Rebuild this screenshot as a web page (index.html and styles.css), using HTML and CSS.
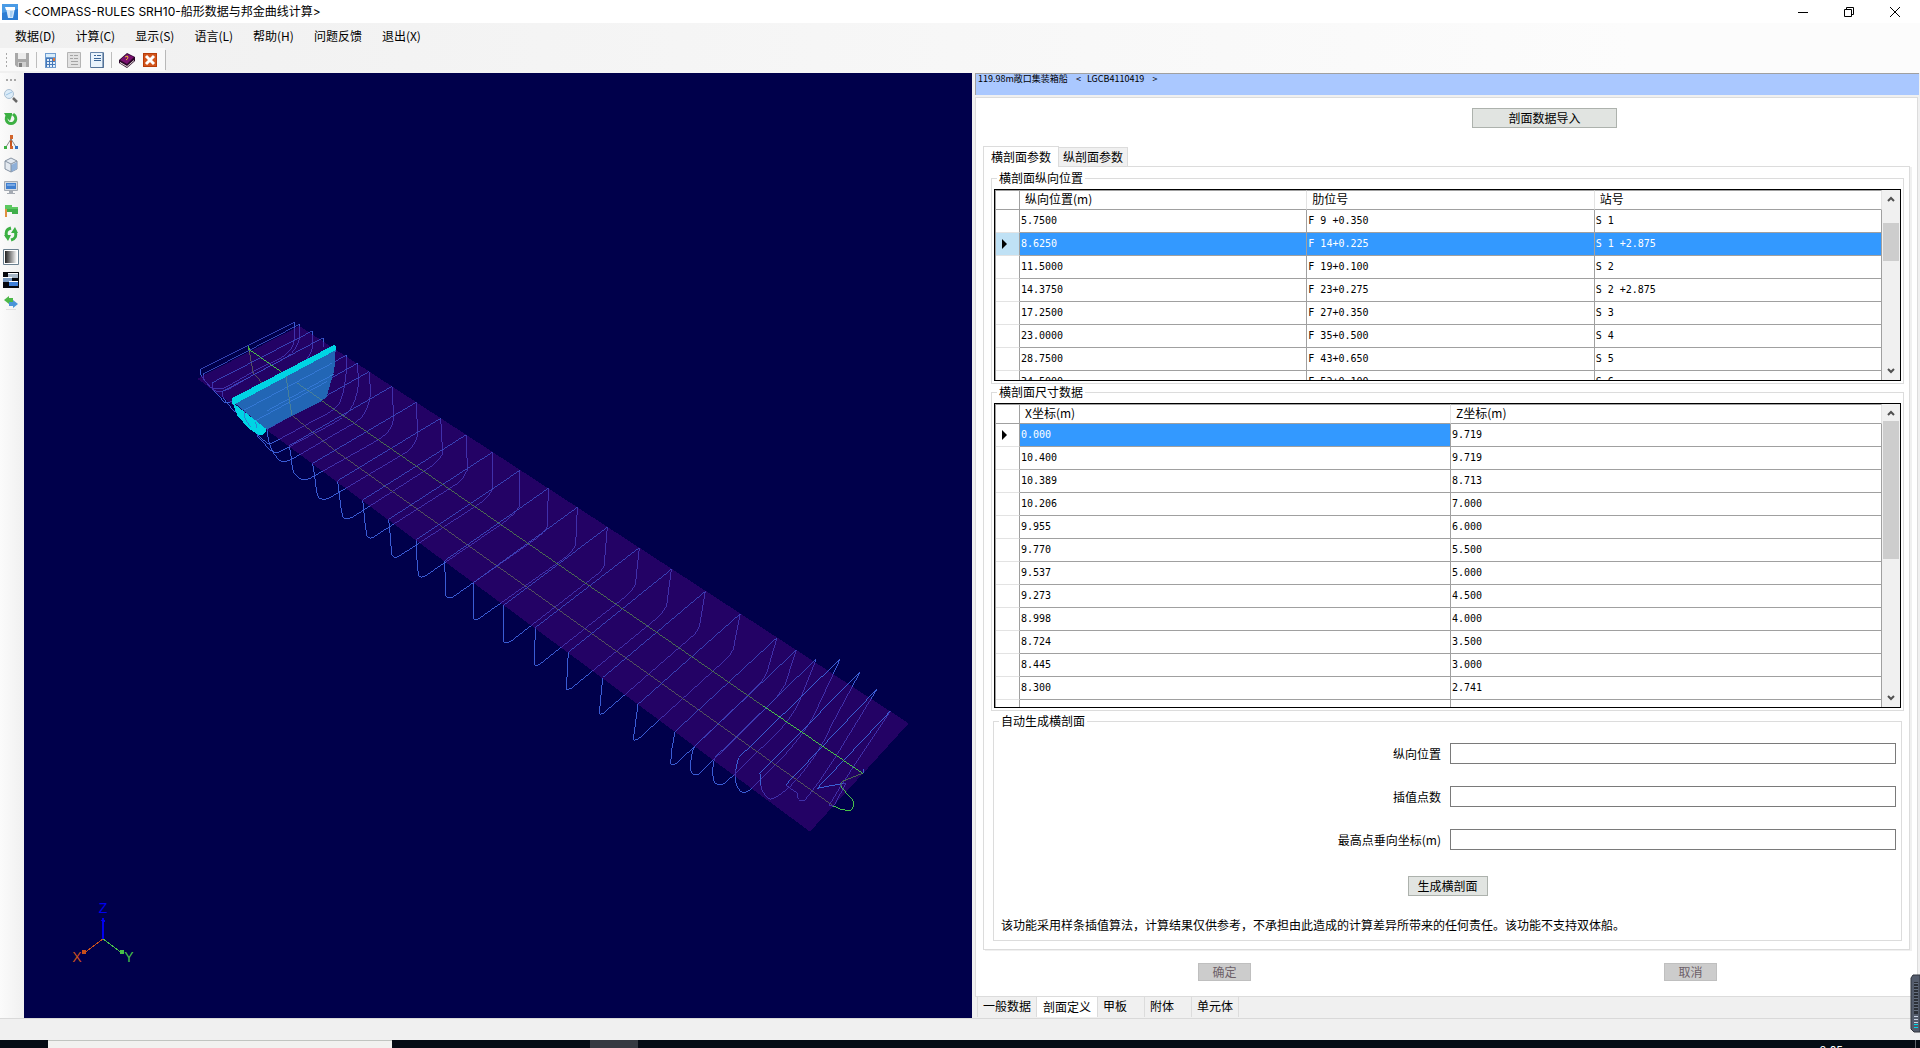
FILE: index.html
```html
<!DOCTYPE html>
<html lang="zh-CN">
<head>
<meta charset="utf-8">
<title>COMPASS-RULES SRH10</title>
<link rel="stylesheet" href="styles.css">
</head>
<body>
<div class="app">
  <header class="titlebar">
    <svg class="app-icon" viewBox="0 0 16 16"><rect width="16" height="16" fill="#2b7cd3"/><path d="M0 0h16v5L0 9z" fill="#4a9be6"/><path d="M4 4h9l-2 10H6z" fill="#d5e8fa"/><path d="M3 3h10v3H4z" fill="#fff"/><path d="M8 7h3l-1 6H8z" fill="#a8cff2"/></svg>
    <h1 class="title">&lt;COMPASS-RULES SRH10-船形数据与邦金曲线计算&gt;</h1>
    <div class="window-controls">
      <button class="win-btn" aria-label="最小化"><svg viewBox="0 0 12 12"><path d="M1 6.500h10" stroke="#000"/></svg></button>
      <button class="win-btn" aria-label="还原"><svg viewBox="0 0 12 12"><path d="M1.500 3.500h7v7h-7zM3.500 3V1.500h7v7H9" stroke="#000" fill="none"/></svg></button>
      <button class="win-btn" aria-label="关闭"><svg viewBox="0 0 12 12"><path d="M1 1l10 10M11 1L1 11" stroke="#000" fill="none"/></svg></button>
    </div>
  </header>

  <div class="bars">
    <nav class="menu">
      <button>数据(D)</button><button>计算(C)</button><button>显示(S)</button><button>语言(L)</button><button>帮助(H)</button><button>问题反馈</button><button>退出(X)</button>
    </nav>
    <div class="toolbar">
      <span class="grip"></span>
      <button class="tool" aria-label="保存"><svg viewBox="0 0 16 16"><path d="M1 1h14v14H3l-2-2z" fill="#a8a8a8"/><path d="M4 1h8v6H4z" fill="#ececec"/><path d="M4 10h8v5H4z" fill="#d0d0d0"/><path d="M5 11h3v4H5z" fill="#808080"/></svg></button>
      <span class="sep"></span>
      <button class="tool" aria-label="计算"><svg viewBox="0 0 16 16"><path d="M2 1h11v15H2z" fill="#6f9cd0"/><path d="M3 2h9v3H3z" fill="#d8ecfa"/><path d="M3 6h9v9H3z" fill="#4678b8"/><path d="M4 7h2v2H4zM7 7h2v2H7zM4 10h2v2H4zM7 10h2v2H7zM10 10h2v2h-2zM4 13h2v2H4zM7 13h2v2H7zM10 13h2v2h-2z" fill="#e2effa"/><path d="M10 6h2v3h-2z" fill="#e07838"/></svg></button>
      <button class="tool" aria-label="报告"><svg viewBox="0 0 16 16"><path d="M1.500.500h13v15h-13z" fill="#e2e2e2" stroke="#b4b4b4"/><path d="M4 3.500h3M8 3.500h4M4 6.500h3M8 6.500h4M5 9.500h7M5 12.500h7" stroke="#a4a4a4"/></svg></button>
      <button class="tool" aria-label="文档"><svg viewBox="0 0 16 16"><path d="M1.500.500h13v15h-13z" fill="#e9f3fc" stroke="#6886aa"/><path d="M14 1v15H2" stroke="#3f5f86" fill="none"/><path d="M5 3.500h2M8 3.500h4M5 6.500h7M5 8.500h7" stroke="#3a6496"/></svg></button>
      <span class="sep"></span>
      <button class="tool" aria-label="帮助"><svg viewBox="0 0 16 16"><path d="M0 8l8-7 8 4v4l-8 7-8-5z" fill="#2a0628"/><path d="M1 8l7-6 7 3-7 7z" fill="#7a1070"/><path d="M1 10l7 4 7-6v1l-7 6-7-4z" fill="#f4f0e8"/><path d="M6 5q3-2 3 0t-2 3" stroke="#f0c030" fill="none"/></svg></button>
      <button class="tool" aria-label="退出"><svg viewBox="0 0 16 16"><path d="M1 1h14v14H1z" fill="#b83c08"/><path d="M2 2h12v12H2z" fill="#d2551c"/><path d="M4 4l8 8M12 4l-8 8" stroke="#fff" stroke-width="3"/></svg></button>
      <span class="toolbar-end"></span>
    </div>
  </div>

  <main class="workspace">
    <aside class="side-tools">
      <span class="side-grip"></span>
      <button class="tool" aria-label="缩放"><svg viewBox="0 0 16 16"><circle cx="6" cy="6" r="4.500" fill="#dcecf8" stroke="#a9bfd2"/><path d="M3 7l6-3" stroke="#9cc4e4"/><path d="M10 10l4 4" stroke="#666" stroke-width="2.500"/></svg></button>
      <button class="tool" aria-label="旋转"><svg viewBox="0 0 16 16"><path d="M4 5a4.800 4.800 0 1 0 8 0l-2-2" stroke="#3cb043" stroke-width="3" fill="none"/><path d="M1 2h8v2L7 10 4 7z" fill="#3cb043"/></svg></button>
      <button class="tool" aria-label="坐标轴"><svg viewBox="0 0 16 16"><path d="M8 3v11" stroke="#c8541a" stroke-width="2"/><path d="M8 5l-5 8M8 5l5 8" stroke="#888" fill="none"/><path d="M7 1h3v4H7zM7 12h3v3H7z" fill="#d2642a"/><path d="M1 12h3v3H1z" fill="#3cb043"/><path d="M12 12h3v3h-3z" fill="#2f6fc0"/></svg></button>
      <button class="tool" aria-label="视图"><svg viewBox="0 0 16 16"><path d="M8 1l6 3v8l-6 3-6-3V4z" fill="#e3e9f0" stroke="#8592a2"/><path d="M8 8l6-3v7l-6 3z" fill="#8fb0d8"/><path d="M2 4l6 3 6-3M8 7v8" stroke="#8592a2" fill="none"/></svg></button>
      <button class="tool" aria-label="显示"><svg viewBox="0 0 16 16"><path d="M1.500 1.500h13v9h-13z" fill="#d5dbe2" stroke="#a4aab2"/><path d="M3 3h10v6H3z" fill="#3f7fd0"/><path d="M4 4h8v2H4z" fill="#78a8e4"/><path d="M6 11h4v2H6zM4 13h8v1H4z" fill="#a4aab2"/></svg></button>
      <button class="tool" aria-label="标记"><svg viewBox="0 0 16 16"><path d="M2 2h7v2h6v7H9V9H2z" fill="#3fae4a"/><path d="M3 2v12" stroke="#e09040" stroke-width="2"/><path d="M2 2h7v2h6v2H2z" fill="#5cc860"/></svg></button>
      <button class="tool" aria-label="刷新"><svg viewBox="0 0 16 16"><path d="M8 2Q1 4 4 11M8 14q7-2 4-9" stroke="#3cb043" stroke-width="3" fill="none"/><path d="M1 9h7l-3 6zM8 7h7l-3-6z" fill="#3cb043"/></svg></button>
      <button class="tool" aria-label="渐变"><svg viewBox="0 0 16 16"><defs><linearGradient id="shade"><stop offset="0" stop-color="#222"/><stop offset="1" stop-color="#fff"/></linearGradient></defs><path d="M.500.500h15v15H.500z" fill="#fff" stroke="#6a8090"/><path d="M2 2h12v12H2z" fill="url(#shade)"/></svg></button>
      <button class="tool" aria-label="窗口"><svg viewBox="0 0 16 16"><path d="M0 0h16v16H0z" fill="#05070c"/><path d="M5 1h10v5H5z" fill="#a8b8c8"/><path d="M0 5h9v5H0z" fill="#7898c0"/><path d="M6 9h9v5H6z" fill="#3f80d8"/><path d="M5 1h10v1H5zM0 5h9v1H0zM6 9h9v1H6z" fill="#fff"/></svg></button>
      <button class="tool" aria-label="切换"><svg viewBox="0 0 16 16"><path d="M1 5l5-4v2h4v4H6v2z" fill="#4cb848"/><path d="M15 9l-5-4v2H6v4h4v2z" fill="#4a94d8"/><path d="M3 14.500h10" stroke="#e0e0e0"/></svg></button>
    </aside>

    <section class="viewport" aria-label="三维视图">
      <svg class="scene" viewBox="24 73 948 945" preserveAspectRatio="xMinYMin meet" shape-rendering="crispEdges">
        <g transform="translate(180 300) scale(.33333)" fill="none" stroke-width="3">
          <!-- hull sections below the deck plane -->
          <g stroke="#3a5cd4">
            <path d="M343 67V115Q340 155 300 175L225 212 150 255Q120 275 90 262L62 225V208"/>
            <path d="M358 73L360 110Q352 150 320 172L225 222 150 265Q115 285 95 265L72 240V222"/>
            <path d="M397 93V145Q388 180 350 202L160 300Q150 310 135 308L97 268V248"/>
            <path d="M430 113V140M126 275L130 295Q160 335 185 350"/>
            <path d="M499 166V215Q492 285 478 310 460 335 420 352L275 430Q262 434 250 420L215 385 193 350V330"/>
            <path d="M532 190L536 250Q530 300 510 330 490 355 460 370L300 455Q285 462 270 450L232 408 227 362"/>
            <path d="M567 215L572 275Q568 325 545 352 525 372 500 382L335 478Q310 490 297 480 265 450 261 388"/>
            <path d="M636 259L641 350Q640 378 620 400 605 415 580 428L390 535Q365 547 350 528 336 520 335 480L328 437"/>
            <path d="M709 307L713 405Q705 435 682 455L455 590Q435 603 418 595 409 585 407 550L398 490"/>
            <path d="M782 355L788 460Q780 480 750 502L520 650Q497 662 488 650 482 625 480 600L473 542"/>
            <path d="M859 404L862 510Q855 532 830 552L590 705Q568 722 561 708 555 680 553 650L548 600"/>
            <path d="M937 457V570Q925 592 900 610L655 770Q640 776 635 765L631 710 626 658"/>
            <path d="M1020 511L1018 620Q1005 642 975 665L740 825Q722 838 715 825L711 780 710 718"/>
            <path d="M1105 565L1102 680Q1095 697 1070 715L820 890Q803 900 797 885L794 782"/>
            <path d="M1192 622L1187 735Q1180 755 1155 773L905 950Q886 966 880 955V848"/>
            <path d="M1282 682L1272 800Q1262 818 1240 832L995 1022Q978 1034 972 1025V915"/>
            <path d="M1378 743L1366 855Q1352 880 1330 895L1080 1092Q1066 1100 1063 1093L1066 983"/>
            <path d="M1474 808L1460 917Q1447 942 1430 955L1175 1164Q1162 1170 1159 1168L1165 1057"/>
            <path d="M1576 874L1558 980Q1547 1004 1530 1015L1270 1240Q1258 1246 1258 1240L1268 1133"/>
            <path d="M1681 941L1660 1047Q1648 1073 1630 1085L1375 1317Q1360 1324 1360 1317L1374 1213"/>
            <path d="M1791 1013L1760 1120Q1750 1142 1715 1175L1490 1390Q1474 1400 1472 1390L1475 1350 1485 1295"/>
            <path d="M1849 1050L1815 1155Q1795 1190 1770 1212L1560 1420Q1542 1434 1532 1412 1530 1370 1543 1340"/>
            <path d="M1909 1076L1860 1200Q1835 1255 1790 1300L1635 1450Q1610 1460 1600 1442 1593 1410 1604 1373"/>
            <path d="M1981 1076L1900 1250Q1865 1310 1810 1370L1710 1470Q1690 1485 1678 1470 1660 1445 1667 1410L1676 1373"/>
            <path d="M2041 1115L1960 1265Q1910 1380 1830 1460 1790 1495 1770 1498 1745 1480 1742 1455L1740 1420"/>
            <path d="M2092 1166L1970 1365Q1920 1445 1875 1500 1858 1510 1853 1490V1480L1817 1455"/>
            <path d="M2132 1232L2040 1370 1975 1470 1948 1515 1960 1520 1998 1450 1985 1450"/>
          </g>
          <path d="M205 138L220 220 335 345 460 448 1020 847 1960 1518M318 228L335 345" stroke="#5e9e3c"/>
          <path d="M52 236L358 78 2186 1270 1890 1595z" fill="#460480" fill-opacity=".5" stroke="none"/>
          <!-- deck edges of each section -->
          <g stroke="#3c4ec4" stroke-opacity=".85">
            <path d="M62 208L343 67M70 222L358 73M97 248L397 93M126 275L430 113M193 330L499 166M227 362L532 190M261 388L567 215M328 437L636 259M398 490L709 307M473 542L782 355M548 600L859 404M626 658L937 457M710 718L1020 511M794 782L1105 565M880 848L1192 622M972 915L1282 682M1066 983L1378 743M1165 1057L1474 808M1268 1133L1576 874M1374 1213L1681 941M1485 1295L1791 1013M1543 1340L1849 1050M1604 1373L1909 1076"/>
          </g>
          <path d="M1676 1373L1981 1076M1740 1420L2041 1115M1817 1455L2092 1166M1912 1465L2132 1232M1912 1465L1990 1450M2050 1408V1418M1676 1373L1667 1410M1740 1420L1742 1455" stroke="#3a60d4"/>
          <path d="M318 228L1755 1222M1982 1458L1985 1445 2048 1420" stroke="#4a6a52"/>
          <path d="M205 138L210 150 350 248M1750 1218L2048 1420M1960 1518Q1985 1533 2010 1532 2021 1528 2021 1510 2020 1498 1998 1478L1982 1458" stroke="#48c048"/>
          <!-- selected section -->
          <path d="M165 310L467 150 463 210 440 290 425 303 258 388z" fill="#2266b5" stroke="none"/>
          <path d="M193 330L455 190M262 332L462 222M227 362L440 245" stroke="#3478d4"/>
          <path d="M318 228L335 345M350 248L425 300" stroke="#48809a"/>
          <path d="M157 312V294L462 135 468 138V150L165 312z" fill="#00d4e4" stroke="none"/>
          <path d="M158 308L258 386V395L248 405H235L205 384 172 347z" fill="#00d4e4" stroke="none"/>
          <path d="M193 335V352L212 382M227 365L230 385" stroke="#2a86d8"/>
        </g>
        <g fill="none">
          <path d="M103 939V920" stroke="#0000f0" stroke-width="2"/><path d="M103 917l2 4-2 2-2-2z" fill="#0000f0"/>
          <path d="M103 939L84 953" stroke="#c8501c"/><path d="M82 950h4v4h-4z" fill="#c8501c"/>
          <path d="M103 939L122 953" stroke="#48c048"/><path d="M120 950h4v4h-4z" fill="#48c048"/>
        </g>
        <g class="axis-names">
          <text x="103" y="913" fill="#0000f0">Z</text>
          <text x="77" y="962" fill="#c8501c">X</text>
          <text x="129" y="962" fill="#48c048">Y</text>
        </g>
      </svg>
    </section>

    <section class="panel">
      <div class="ship-name">119.98m敞口集装箱船    &lt;   LGCB4110419    &gt;</div>
      <div class="page">
        <div class="import-row"><button class="btn import">剖面数据导入</button></div>
        <div class="tabs"><button class="tab active">横剖面参数</button><button class="tab">纵剖面参数</button></div>
        <div class="pane">
          <fieldset class="group">
            <legend>横剖面纵向位置</legend>
            <div class="grid-box positions">
              <div class="grid-view">
                <table>
                  <colgroup><col class="marker-col"><col><col><col></colgroup>
                  <thead><tr><th></th><th>纵向位置(m)</th><th>肋位号</th><th>站号</th></tr></thead>
                  <tbody>
                    <tr><th></th><td>5.7500</td><td>F 9 +0.350</td><td>S 1</td></tr>
                    <tr class="selected"><th><svg class="marker" viewBox="0 0 6 10"><path d="M0 0l5 5-5 5z"/></svg></th><td>8.6250</td><td>F 14+0.225</td><td>S 1 +2.875</td></tr>
                    <tr><th></th><td>11.5000</td><td>F 19+0.100</td><td>S 2</td></tr>
                    <tr><th></th><td>14.3750</td><td>F 23+0.275</td><td>S 2 +2.875</td></tr>
                    <tr><th></th><td>17.2500</td><td>F 27+0.350</td><td>S 3</td></tr>
                    <tr><th></th><td>23.0000</td><td>F 35+0.500</td><td>S 4</td></tr>
                    <tr><th></th><td>28.7500</td><td>F 43+0.650</td><td>S 5</td></tr>
                    <tr><th></th><td>34.5000</td><td>F 52+0.100</td><td>S 6</td></tr>
                  </tbody>
                </table>
              </div>
              <div class="scrollbar">
                <svg viewBox="0 0 8 6"><path d="M1 5l3-3 3 3"/></svg>
                <div class="track"><div class="thumb"></div></div>
                <svg viewBox="0 0 8 6"><path d="M1 1l3 3 3-3"/></svg>
              </div>
            </div>
          </fieldset>

          <fieldset class="group">
            <legend>横剖面尺寸数据</legend>
            <div class="grid-box sizes">
              <div class="grid-view">
                <table>
                  <colgroup><col class="marker-col"><col><col></colgroup>
                  <thead><tr><th></th><th>X坐标(m)</th><th>Z坐标(m)</th></tr></thead>
                  <tbody>
                    <tr><th><svg class="marker" viewBox="0 0 6 10"><path d="M0 0l5 5-5 5z"/></svg></th><td class="current">0.000</td><td>9.719</td></tr>
                    <tr><th></th><td>10.400</td><td>9.719</td></tr>
                    <tr><th></th><td>10.389</td><td>8.713</td></tr>
                    <tr><th></th><td>10.206</td><td>7.000</td></tr>
                    <tr><th></th><td>9.955</td><td>6.000</td></tr>
                    <tr><th></th><td>9.770</td><td>5.500</td></tr>
                    <tr><th></th><td>9.537</td><td>5.000</td></tr>
                    <tr><th></th><td>9.273</td><td>4.500</td></tr>
                    <tr><th></th><td>8.998</td><td>4.000</td></tr>
                    <tr><th></th><td>8.724</td><td>3.500</td></tr>
                    <tr><th></th><td>8.445</td><td>3.000</td></tr>
                    <tr><th></th><td>8.300</td><td>2.741</td></tr>
                    <tr><th></th><td></td><td></td></tr>
                  </tbody>
                </table>
              </div>
              <div class="scrollbar">
                <svg viewBox="0 0 8 6"><path d="M1 5l3-3 3 3"/></svg>
                <div class="track"><div class="thumb"></div></div>
                <svg viewBox="0 0 8 6"><path d="M1 1l3 3 3-3"/></svg>
              </div>
            </div>
          </fieldset>

          <fieldset class="group generate">
            <legend>自动生成横剖面</legend>
            <div class="form">
              <label for="pos">纵向位置</label><input id="pos" type="text">
              <label for="count">插值点数</label><input id="count" type="text">
              <label for="top">最高点垂向坐标(m)</label><input id="top" type="text">
            </div>
            <button class="btn make">生成横剖面</button>
            <p class="note">该功能采用样条插值算法，计算结果仅供参考，不承担由此造成的计算差异所带来的任何责任。该功能不支持双体船。</p>
          </fieldset>
        </div>
        <div class="actions"><button class="btn" disabled>确定</button><button class="btn" disabled>取消</button></div>
      </div>
      <div class="bottom-tabs">
        <button>一般数据</button><button class="active">剖面定义</button><button>甲板</button><button>附体</button><button>单元体</button>
      </div>
    </section>
  </main>

  <footer class="statusbar"></footer>
  <div class="taskbar"><div class="task-search"></div><div class="task-active"></div><span class="clock">9:05</span><div class="show-desktop"></div></div>

  <svg class="meter" viewBox="0 0 10 60"><path d="M10 1H3L1 4v51l3 3h6z" fill="#545c6c" stroke="#2e333c"/><path d="M4 8h4v32H4z" fill="#2c3038"/><path d="M4 9.500h4M4 12.500h4M4 15.500h4M4 18.500h4M4 21.500h4M4 24.500h4M4 27.500h4M4 30.500h4M4 33.500h4M4 36.500h4" stroke="#667080"/><path d="M4 42.500h4M4 45.500h4M4 48.500h4" stroke="#c8d0e0"/><path d="M4 50.500h4M4 53.500h4" stroke="#00d8e8"/></svg>
</div>
</body>
</html>
```
FILE: styles.css
```css
* { box-sizing: border-box; }

body {
  margin: 0;
  font: 12px/14px "Noto Sans CJK SC", sans-serif;
  color: #000;
  background: #f0f0f0;
}

button {
  font: inherit;
  color: inherit;
  border: 0;
  padding: 0;
  background: none;
}

.app {
  position: relative;
  display: flex;
  flex-direction: column;
  height: 100vh;
  overflow: hidden;
}

/* title bar */
.titlebar {
  display: flex;
  align-items: center;
  height: 23px;
  padding-left: 2px;
  background: #fff;
}
.app-icon { width: 16px; height: 16px; margin-right: 6px; }
.title { margin: 0; font: 12px/16px Inter, "Noto Sans CJK SC", sans-serif; }
.window-controls { display: flex; margin-left: auto; padding-right: 2px; }
.win-btn { width: 46px; height: 20px; }
.win-btn svg { display: block; width: 12px; height: 12px; margin: 0 auto; }

/* menu and toolbar */
.bars { height: 50px; background: linear-gradient(90deg, #f0f0f0, #fcfcfc 85%); }
.menu {
  display: flex;
  gap: 20px;
  height: 25px;
  padding-left: 15px;
}
.toolbar {
  display: flex;
  align-items: center;
  width: 165px;
  height: 23px;
  padding-left: 6px;
  gap: 7px;
  background: #f9f9f9;
}
.tool { flex: none; width: 16px; height: 16px; }
.tool svg { display: block; width: 16px; height: 16px; }
.grip { width: 2px; height: 14px; background: repeating-linear-gradient(#a8a8a8 0 2px, transparent 2px 4px); }
.sep { width: 1px; height: 16px; margin-left: -1px; background: #bdbdbd; }
.toolbar-end { width: 1px; height: 20px; margin-left: auto; background: #b8b8b8; }

/* work area */
.workspace {
  flex: 1;
  display: grid;
  grid-template-columns: 24px 1fr 1fr;
  min-height: 0;
}
.side-tools {
  display: flex;
  flex-direction: column;
  align-items: center;
  gap: 7px;
  padding: 6px 2px 0 0;
  background: linear-gradient(90deg, #fbfbfb, #f0f0f0);
}
.side-grip { width: 10px; height: 2px; background: repeating-linear-gradient(90deg, #a8a8a8 0 2px, transparent 2px 4px); }
.viewport { overflow: hidden; background: #00004b; }
.scene { display: block; width: 100%; height: 100%; }
.axis-names { font: 14px "Liberation Sans", sans-serif; text-anchor: middle; }

/* right panel */
.panel {
  display: flex;
  flex-direction: column;
  padding-left: 3px;
  min-width: 0;
}
.ship-name {
  height: 22px;
  margin-right: 1px;
  padding-left: 2px;
  border-top: 1px solid #a0a0a0;
  border-left: 1px solid #a0a0a0;
  background: #aac8ff;
  font-size: 9px;
  line-height: 10px;
  white-space: pre;
}
.page {
  flex: 1;
  display: flex;
  flex-direction: column;
  margin: 2px 2px 0 0;
  padding: 10px 7px 0 7px;
  border: 1px solid #dcdcdc;
  background: #fff;
}
.btn {
  height: 20px;
  border: 1px solid #adb2ad;
  background: #e1e4e1;
  line-height: 18px;
}
.import-row { display: flex; justify-content: flex-end; height: 38px; padding-right: 293px; }
.import { width: 145px; }

.tabs { display: flex; align-items: flex-end; }
.tab {
  height: 19px;
  padding: 0 4px;
  border: 1px solid #dcdcdc;
  border-bottom: 0;
  background: #f0f0f0;
}
.tab.active {
  height: 21px;
  padding: 0 7px;
  margin-right: -1px;
  margin-bottom: -1px;
  background: #fff;
  z-index: 1;
}
.pane {
  padding: 5px 5px 8px 7px;
  border: 1px solid #dcdcdc;
  box-shadow: 2px 1px #f0f0f0;
}

.group {
  min-width: 0;
  margin: 0 0 2px;
  padding: 4px 2px 2px;
  border: 1px solid #dcdcdc;
}
.group legend { margin-left: 3px; padding: 0 2px; height: 13px; line-height: 12px; }

/* data grids */
.grid-box { display: flex; border: 1px solid #000; }
.positions { height: 192px; }
.sizes { height: 305px; }
.grid-view { flex: 1; overflow: hidden; border-left: 1px solid #a0a0a0; }
table {
  width: 100%;
  table-layout: fixed;
  border-collapse: separate;
  border-spacing: 0;
}
.marker-col { width: 24px; }
th, td {
  padding: 0 1px;
  border-right: 1px solid #a0a0a0;
  border-bottom: 1px solid #a0a0a0;
  font-weight: 400;
  text-align: left;
  white-space: pre;
}
thead th { height: 20px; padding: 0 5px 2px; border-top: 1px solid #a0a0a0; border-right-color: #e3e3e3; }
thead th:first-child { border-right-color: #a0a0a0; }
tbody th { height: 23px; padding: 0 6px; border-bottom-color: #e3e3e3; }
td { font: 10px/14px "DejaVu Sans Mono", monospace; }
.selected td, .current { background: #3399ff; color: #fff; }
.selected th { background: #bfe1f5; }
.marker { display: block; width: 6px; height: 10px; }

.scrollbar {
  display: flex;
  flex-direction: column;
  align-items: center;
  width: 18px;
  padding: 6px 1px 6px;
  background: #f0f0f0;
}
.scrollbar svg { width: 8px; height: 6px; fill: none; stroke: #505050; stroke-width: 2; }
.track { flex: 1; align-self: stretch; margin: 5px 0; }
.thumb { background: #cdcdcd; }
.positions .track { padding-top: 16px; }
.positions .thumb { height: 38px; }
.sizes .thumb { height: 138px; }

/* section generator */
.group.generate { margin: 4px 2px 0; padding: 15px 0 8px; text-align: center; }
.generate legend { margin-left: 5px; text-align: left; }
.form {
  display: grid;
  grid-template-columns: 1fr 1fr;
  align-items: center;
  gap: 22px 9px;
  padding: 0 5px 0 1px;
  text-align: right;
}
.form input {
  width: 100%;
  height: 21px;
  border: 1px solid #7a7a7a;
  background: #fff;
}
.make { width: 80px; margin-top: 26px; }
.note { margin: 22px 0 0; padding-left: 7px; text-align: left; }

.actions {
  display: flex;
  justify-content: space-between;
  padding: 13px 193px 0 215px;
}
.actions .btn {
  width: 53px;
  height: 18px;
  border-color: #bfbfbf;
  background: #ccc;
  color: #6d6068;
  line-height: 16px;
}

.bottom-tabs { display: flex; height: 21px; padding-left: 2px; }
.bottom-tabs button {
  height: 20px;
  padding: 0 17px 3px 5px;
  border-right: 1px solid #dcdcdc;
}
.bottom-tabs button:first-child { padding-right: 5px; border-left: 1px solid #dcdcdc; }
.bottom-tabs button:last-child { padding-right: 5px; }
.bottom-tabs .active { padding: 0 6px; background: #fff; }

.statusbar { height: 22px; border-top: 1px solid #d9d9d9; }

.taskbar {
  display: flex;
  height: 8px;
  overflow: hidden;
  padding-left: 48px;
  background: #050b14;
  color: #fff;
}
.task-search { width: 344px; background: #f1f1ef; border-top: 1px solid #c0c4c0; }
.task-active { width: 48px; margin-left: 198px; background: #363a42; }
.clock { margin-left: auto; padding: 3px 72px 0 0; }
.show-desktop { width: 5px; border-left: 1px solid #60646c; }

/* desktop gadget overlapping the window edge */
.meter { position: absolute; right: 0; bottom: 14px; width: 10px; height: 60px; }
```
